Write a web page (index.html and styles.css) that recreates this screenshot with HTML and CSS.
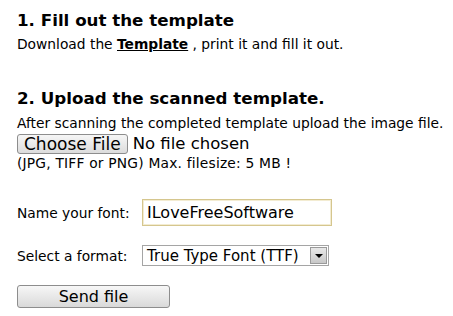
FILE: index.html
```html
<!DOCTYPE html>
<html lang="en">
    <head>
        <meta charset="UTF-8" />
        <title>Font Upload</title>
        <link rel="stylesheet" href="styles.css">
    </head>
    <body>
        <div class="page">
            <!-- Step 1 -->
            <h2 class="step-title">1. Fill out the template</h2>
            <p class="step-text">Download the <a href="#" class="template-link">Template</a> , print it and fill it out.</p>

            <!-- Step 2 -->
            <h2 class="step-title step-two">2. Upload the scanned template.</h2>
            <p class="step-text">After scanning the completed template upload the image file.</p>
            <div class="file-row">
                <span class="file-btn">Choose File</span>
                <span class="file-name">No file chosen</span>
            </div>
            <p class="step-text file-note">(JPG, TIFF or PNG) Max. filesize: 5 MB !</p>

            <form class="font-form">
                <div class="form-row">
                    <label class="form-label" for="fontName">Name your font:</label>
                    <input type="text" id="fontName" class="text-input" value="ILoveFreeSoftware" />
                </div>

                <div class="form-row">
                    <span class="form-label">Select a format:</span>
                    <div class="fake-select">
                        <span class="select-text">True Type Font (TTF)</span>
                        <span class="select-arrow"></span>
                    </div>
                </div>

                <button type="button" class="send-btn">Send file</button>
            </form>
        </div>
    </body>
</html>
```
FILE: styles.css
```css
/* --- Basic Reset --- */
* {
  margin: 0;
  padding: 0;
  box-sizing: border-box;
}

body {
  background-color: #fff;
  font-family: "DejaVu Sans", Verdana, sans-serif;
  color: #000;
}

.page {
  padding: 10px 0 0 17px;
}

/* --- Steps --- */
.step-title {
  font-size: 16.7px;
  font-weight: bold;
  line-height: 20px;
}

.step-two {
  margin-top: 35px;
}

.step-text {
  font-size: 13.8px;
  line-height: 17px;
  margin-top: 6px;
}

.step-two + .step-text {
  margin-top: 7px;
}

.template-link {
  color: #000;
  font-weight: bold;
}

/* --- Fake file input --- */
.file-row {
  display: flex;
  align-items: center;
  gap: 5px;
  margin-top: 2px;
}

.file-btn {
  display: inline-block;
  height: 20px;
  padding: 0 6px;
  font-size: 17px;
  line-height: 18px;
  border: 1px solid #8d8d8d;
  border-radius: 3px;
  background: linear-gradient(#f6f6f6, #dcdcdc);
}

.file-name {
  font-size: 16.5px;
  line-height: 20px;
}

.file-row + .step-text {
  margin-top: 1px;
}

.file-note {
  letter-spacing: 0.2px;
}

/* --- Form --- */
.font-form {
  margin-top: 27px;
}

.form-row {
  display: flex;
  align-items: center;
  margin-bottom: 19px;
}

.form-label {
  width: 125px;
  font-size: 13.8px;
}

.text-input {
  width: 190px;
  height: 27px;
  padding: 0 4px;
  border: 1px solid #d5c68e;
  box-shadow: inset 0 0 0 1px #f3ecd2;
  font-family: "DejaVu Sans", Verdana, sans-serif;
  font-size: 16px;
  color: #000;
  outline: none;
}

.fake-select {
  display: flex;
  align-items: center;
  justify-content: space-between;
  width: 187px;
  height: 21px;
  border: 1px solid #a5a5a5;
  padding: 0 1px 0 4px;
}

.select-text {
  font-size: 15px;
}

.select-arrow {
  width: 17px;
  height: 17px;
  border: 1px solid #9a9a9a;
  background: linear-gradient(#e8e8e8, #c8c8c8);
  position: relative;
}

.select-arrow::after {
  content: "";
  position: absolute;
  left: 4px;
  top: 6px;
  border-left: 4px solid transparent;
  border-right: 4px solid transparent;
  border-top: 4px solid #000;
}

.send-btn {
  width: 153px;
  height: 23px;
  font-family: "DejaVu Sans", Verdana, sans-serif;
  font-size: 16px;
  color: #000;
  border: 1px solid #8d8d8d;
  border-radius: 3px;
  background: linear-gradient(#f7f7f7, #d9d9d9);
}
```
